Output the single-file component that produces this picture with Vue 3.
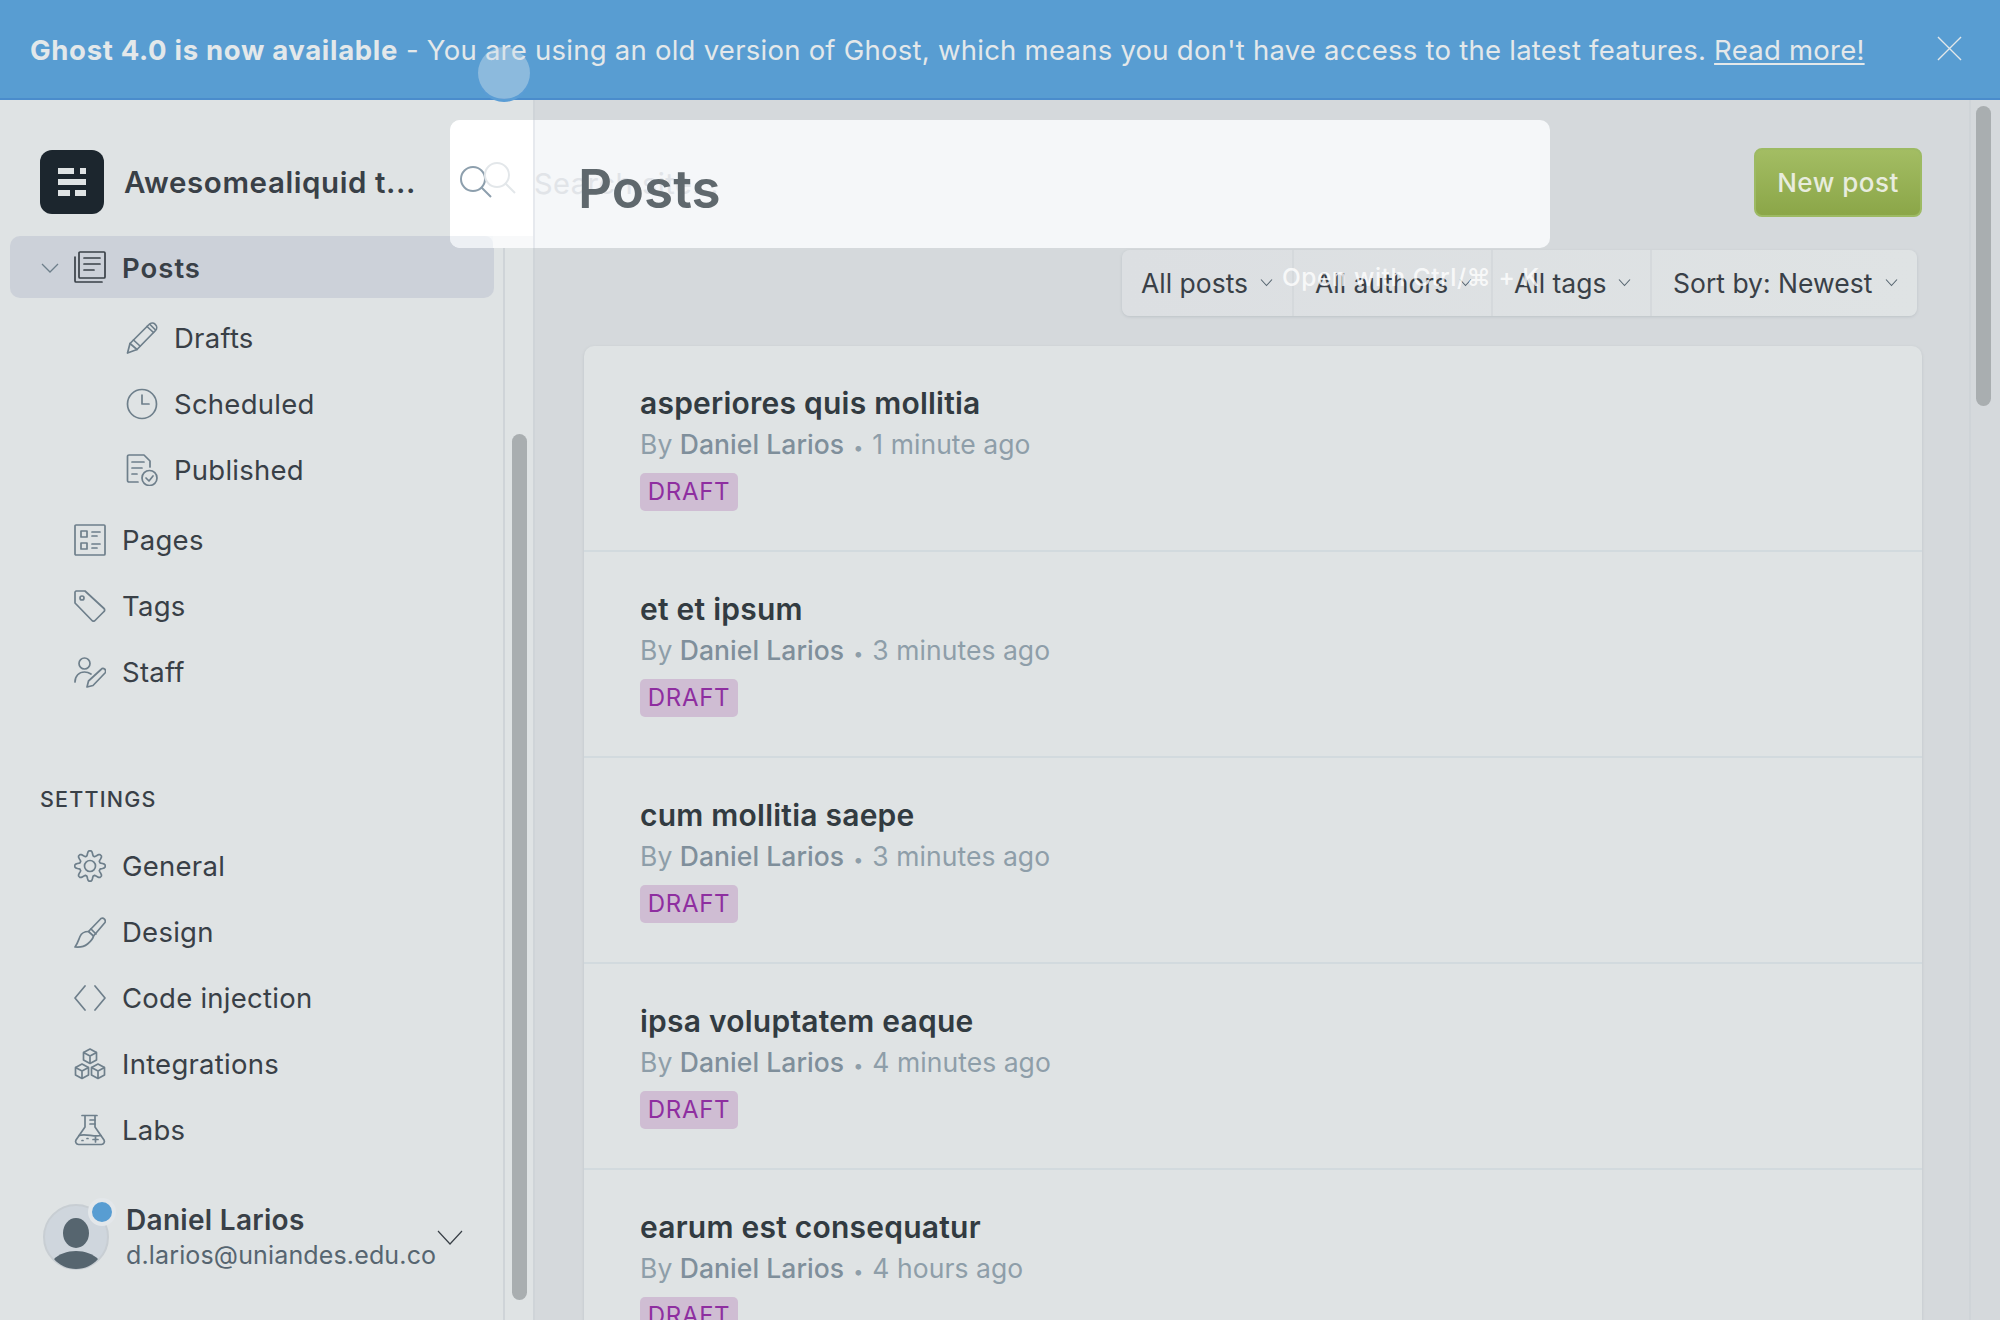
<script setup>
const gear = (() => {
  const cx = 16, cy = 16, n = 8, steps = 96
  let d = ''
  for (let i = 0; i < steps; i++) {
    const a = (i / steps) * Math.PI * 2
    const r = 12.8 + 2.4 * Math.max(-1, Math.min(1, 1.35 * Math.cos(n * a)))
    d += (i ? 'L' : 'M') + (cx + r * Math.sin(a)).toFixed(2) + ' ' + (cy - r * Math.cos(a)).toFixed(2)
  }
  return d + 'z'
})()

const circle = (x, y, r) => `M${x - r} ${y}a${r} ${r} 0 1 0 ${2 * r} 0a${r} ${r} 0 1 0 ${-2 * r} 0z`
const cube = (x, y) => `M${x} ${y}l6.5 3.5v7.5L${x} ${y + 14.5}l-6.5-3.5V${y + 3.5}zM${x - 6.5} ${y + 3.5}L${x} ${y + 7}l6.5-3.5M${x} ${y + 7}v7.5`

const icons = {
  posts: ['M6 1h24a1 1 0 0 1 1 1v24a1 1 0 0 1-1 1H6a1 1 0 0 1-1-1V2a1 1 0 0 1 1-1z', 'M1 6v24a1 1 0 0 0 1 1h26', 'M10 7h16M10 13h16M10 19h10'],
  drafts: ['M1.5 31l2.500-9.500L23 2.500a4 4 0 0 1 6.500 6L11 27.500z', 'M4 21.500l7 6M21 4.500l6.500 6M7.500 18l6.500 6M24 2.500l5 5'],
  scheduled: [circle(16, 16, 14.5), 'M16 7v9h7'],
  published: ['M12 28H3a1.5 1.5 0 0 1-1.5-1.5V2.5A1.5 1.5 0 0 1 3 1h15l6 6v6', 'M6 8h12M6 14h10M6 20h5', circle(23.5, 24, 7.5), 'M20 24l3 3 4-5'],
  pages: ['M2 1h28a1 1 0 0 1 1 1v28a1 1 0 0 1-1 1H2a1 1 0 0 1-1-1V2a1 1 0 0 1 1-1z', 'M7 7h6v6H7zM7 19h6v6H7zM18 8h8M18 12h5M18 20h8M18 24h5'],
  tags: ['M2 1h9l19 17.5a2 2 0 0 1 0 3L21 30.5a2 2 0 0 1-3 0L1 13V2z', circle(8, 8, 2)],
  staff: [circle(10.5, 7.5, 5.5), 'M1 26c0-6 4-10 9.5-10 2.5 0 4.5.7 6.5 2', 'M13 31l1.500-6L27 13.500a2.500 2.500 0 0 1 4 3.500L19 29.500z'],
  general: [gear, circle(16, 16, 5.5)],
  design: ['M27 2.500a3 3 0 0 1 4 4L19.500 20l-5-4.500z', 'M17 13l5 5', 'M14.500 15.500c-4 0-7 1.500-8.500 5-1.500 3.500-2.500 7.500-5 10.500 5 .5 9.500-.5 12.500-3 3-2.500 5.500-5 6-8'],
  code: ['M11 4L1 16l10 12M21 4l10 12-10 12'],
  integrations: [cube(16, 1), cube(8, 16), cube(24, 16)],
  labs: ['M8 1.500h15M11 1.500V13L2 26a3 3 0 0 0 2.500 4.500h23A3 3 0 0 0 30 26L21 13V1.500', 'M21 6h-5M21 10h-5M5 21.500c7-2.500 15 2 22 0', 'M8 26.500h1M13 24.500h1M19 25.500h5M21.500 23v5'],
}

const postChildren = [
  { label: 'Drafts', icon: 'drafts' },
  { label: 'Scheduled', icon: 'scheduled' },
  { label: 'Published', icon: 'published' },
]
const primary = [
  { label: 'Pages', icon: 'pages' },
  { label: 'Tags', icon: 'tags' },
  { label: 'Staff', icon: 'staff' },
]
const settings = [
  { label: 'General', icon: 'general' },
  { label: 'Design', icon: 'design' },
  { label: 'Code injection', icon: 'code' },
  { label: 'Integrations', icon: 'integrations' },
  { label: 'Labs', icon: 'labs' },
]
const filters = [
  { label: 'All posts', cls: 'f1' },
  { label: 'All authors', cls: 'f2' },
  { label: 'All tags', cls: 'f3' },
  { label: 'Sort by: Newest', cls: 'f4' },
]
const posts = [
  { title: 'asperiores quis mollitia', age: '1 minute ago' },
  { title: 'et et ipsum', age: '3 minutes ago' },
  { title: 'cum mollitia saepe', age: '3 minutes ago' },
  { title: 'ipsa voluptatem eaque', age: '4 minutes ago' },
  { title: 'earum est consequatur', age: '4 hours ago' },
]
</script>

<template>
  <div class="page">
    <header class="banner">
      <p class="banner-text"><strong>Ghost 4.0 is now available</strong> - You are using an old version of Ghost, which means you don't have access to the latest features. <a>Read more!</a></p>
      <svg class="close" viewBox="0 0 26 26"><path d="M1 1l24 24M25 1L1 25" /></svg>
    </header>

    <div class="body">
      <aside class="sidebar">
        <div class="brand">
          <div class="logo">
            <svg viewBox="0 0 28 28" width="28" height="28">
              <path d="M0 0h16v6H0zM22 0h6v6h-6zM0 11h28v6H0zM0 22h12v6H0zM17 22h11v6H17z" fill="#dfe3e4" />
            </svg>
          </div>
          <span class="brand-name">Awesomealiquid t...</span>
        </div>

        <div class="nav-row active">
          <svg class="chev" viewBox="0 0 18 10"><path d="M1 1l8 8 8-8" /></svg>
          <svg class="ico dark" viewBox="0 0 32 32"><path v-for="d in icons.posts" :key="d" :d="d" /></svg>
          <span>Posts</span>
        </div>
        <div class="children">
          <div v-for="item in postChildren" :key="item.label" class="nav-row child">
            <svg class="ico" viewBox="0 0 32 32"><path v-for="d in icons[item.icon]" :key="d" :d="d" /></svg>
            <span>{{ item.label }}</span>
          </div>
        </div>
        <div class="group">
          <div v-for="item in primary" :key="item.label" class="nav-row">
            <svg class="ico" viewBox="0 0 32 32"><path v-for="d in icons[item.icon]" :key="d" :d="d" /></svg>
            <span>{{ item.label }}</span>
          </div>
        </div>

        <h4 class="section">SETTINGS</h4>
        <div class="group-settings">
          <div v-for="item in settings" :key="item.label" class="nav-row">
            <svg class="ico" viewBox="0 0 32 32"><path v-for="d in icons[item.icon]" :key="d" :d="d" /></svg>
            <span>{{ item.label }}</span>
          </div>
        </div>

        <div class="user">
          <div class="avatar">
            <svg viewBox="0 0 66 66" width="66" height="66">
              <circle cx="33" cy="33" r="32" fill="#cfd6dd" stroke="#c8ced3" stroke-width="2" />
              <ellipse cx="33" cy="29" rx="13" ry="15" fill="#56656f" />
              <path d="M11 55c5-5 13-8 22-8s17 3 22 8c-5 6-13 10-22 10s-17-4-22-10z" fill="#56656f" />
            </svg>
            <span class="dot"></span>
          </div>
          <div class="user-text">
            <div class="user-name">Daniel Larios</div>
            <div class="user-mail">d.larios@uniandes.edu.co</div>
          </div>
          <svg class="user-chev" viewBox="0 0 26 16"><path d="M1 1l12 13L25 1" /></svg>
        </div>
      </aside>

      <div class="gutter"><div class="thumb side-thumb"></div></div>

      <main class="main">
        <div class="head">
          <button class="new">New post</button>
        </div>
        <div class="filter-wrap">
          <div class="filters">
            <div v-for="f in filters" :key="f.label" class="filter" :class="f.cls">
              <span>{{ f.label }}</span>
              <svg viewBox="0 0 12 8"><path d="M.5 .5l5.500 6 5.500-6" /></svg>
            </div>
          </div>
        </div>
        <section class="list">
          <article v-for="p in posts" :key="p.title" class="post">
            <h3>{{ p.title }}</h3>
            <p class="meta">By <b>Daniel Larios</b><i>•</i>{{ p.age }}</p>
            <span class="draft">DRAFT</span>
          </article>
        </section>
      </main>

      <div class="gutter main-gutter"><div class="thumb main-thumb"></div></div>
    </div>

    <!-- Search overlay caught mid-fade, lying over the page -->
    <div class="search">
      <div class="search-left"></div>
      <div class="search-under"></div>
      <div class="search-low"></div>
      <svg class="glass g1" viewBox="0 0 34 34"><path d="M25 13a12 12 0 1 1-24 0a12 12 0 1 1 24 0zM21.500 21.500L31 31" /></svg>
      <svg class="glass g2" viewBox="0 0 34 34"><path d="M25 13a12 12 0 1 1-24 0a12 12 0 1 1 24 0zM21.500 21.500L31 31" /></svg>
      <span class="search-ph">Search site...</span>
    </div>
    <h1 class="ghost-title">Posts</h1>
    <span class="hint">Open with Ctrl/⌘ + K</span>
    <div class="beacon"></div>
  </div>
</template>

<style>
html, body { margin: 0; background: #dfe3e4; }
</style>

<style scoped>
.page {
  position: relative;
  width: 2000px;
  height: 1320px;
  overflow: hidden;
  display: flex;
  flex-direction: column;
  font-family: Inter, "Noto Sans", sans-serif;
  color: #394047;
}
.banner {
  height: 100px;
  box-sizing: border-box;
  flex: none;
  background: #589dd2;
  border-bottom: 2px solid #4a8ccc;
  padding-left: 30px;
  display: flex;
  align-items: center;
  color: #e3e8ea;
  position: relative;
}
.banner-text { margin: 0; font-size: 27.5px; letter-spacing: 0.25px; white-space: nowrap; position: relative; top: 1px; }
.banner-text strong { font-weight: 700; letter-spacing: 0.68px; }
.banner-text a { text-decoration: underline; text-underline-offset: 3px; text-decoration-thickness: 2px; }
.close { position: absolute; left: 1937px; top: 36px; width: 25px; height: 25px; fill: none; stroke: #e3e8ea; stroke-width: 1.4; }

.body { flex: 1; display: flex; min-height: 0; }
.sidebar {
  width: 505px;
  flex: none;
  box-sizing: border-box;
  background: #dfe3e4;
  padding: 50px 0 0 10px;
  position: relative;
}
.sidebar::after {
  content: "";
  position: absolute;
  right: 0;
  top: 136px;
  bottom: 0;
  width: 2px;
  background: #cfd4d8;
}
.brand { display: flex; align-items: center; padding-left: 30px; gap: 20px; height: 64px; }
.logo {
  width: 64px; height: 64px; border-radius: 12px; background: #1c262e;
  display: flex; align-items: center; justify-content: center;
}
.brand-name { font-size: 29.5px; font-weight: 600; letter-spacing: 0.6px; white-space: nowrap; }

.nav-row {
  display: flex;
  align-items: center;
  height: 66px;
  padding-left: 64px;
  font-size: 27.5px;
  letter-spacing: 0.25px;
  color: #394047;
}
.nav-row.active {
  width: 484px;
  height: 62px;
  box-sizing: border-box;
  margin-top: 22px;
  border-radius: 10px;
  background: #ccd1d9;
  font-weight: 600;
  letter-spacing: 1px;
  position: relative;
}
.nav-row.active span { position: relative; top: 1px; }
.nav-row.child { padding-left: 116px; }
.chev { position: absolute; left: 31px; top: 27px; width: 18px; height: 10px; fill: none; stroke: #6e7f8b; stroke-width: 1.3; }
.ico { width: 32px; height: 32px; flex: none; margin-right: 16px; fill: none; stroke: #6e7f8b; stroke-width: 1.7; stroke-linejoin: round; stroke-linecap: round; }
.ico.dark { stroke: #394047; }
.children { margin-top: 7px; }
.group { margin-top: 4px; }
.section {
  margin: 82px 0 0 30px;
  height: 24px;
  line-height: 24px;
  font-size: 21.5px;
  font-weight: 500;
  letter-spacing: 1.2px;
  color: #394047;
}
.group-settings { margin-top: 22px; }

.user { display: flex; align-items: center; padding-left: 33px; margin-top: 39px; position: relative; }
.avatar { width: 66px; height: 66px; position: relative; flex: none; }
.dot {
  position: absolute; left: 45px; top: -6px; width: 20px; height: 20px;
  border-radius: 50%; background: #589dd2; border: 4px solid #e3e7ea;
}
.user-text { margin-left: 17px; white-space: nowrap; }
.user-name { font-size: 28px; font-weight: 600; line-height: 36px; letter-spacing: 0.3px; }
.user-mail { font-size: 25px; line-height: 34px; letter-spacing: 0.15px; color: #566570; }
.user-chev { position: absolute; left: 427px; top: 28px; width: 26px; height: 16px; fill: none; stroke: #394047; stroke-width: 1.2; }

.gutter { width: 28px; flex: none; background: #dfe3e4; position: relative; border-right: 2px solid #cfd4d8; }
.thumb { position: absolute; width: 15px; background: #a9aeb0; border-radius: 8px; }
.side-thumb { left: 7px; top: 334px; height: 866px; }
.main-gutter { width: 29px; background: #d5d9dc; border-right: 0; border-left: 2px solid #cfd4d8; }
.main-thumb { left: 5px; top: 6px; height: 300px; }

.main { flex: 1; min-width: 0; background: #d5d9dc; padding: 48px 47px 0 49px; overflow: hidden; }
.head { display: flex; justify-content: flex-end; height: 69px; }
.new {
  width: 168px; height: 69px; border-radius: 8px; border: 2px solid #9dba63;
  background: linear-gradient(#a3bd63, #8ba648);
  color: #e8ecde; font: 500 26px Inter, sans-serif; letter-spacing: 0.5px;
}
.filter-wrap { display: flex; justify-content: flex-end; padding-right: 5px; margin-top: 33px; }
.filters {
  display: flex; height: 66px; border-radius: 8px;
  background: linear-gradient(90deg, #dcdfe2, #dfe3e4);
  box-shadow: 0 1px 3px rgba(120, 130, 140, 0.25);
}
.filter {
  display: flex; align-items: center; justify-content: space-between; box-sizing: border-box;
  padding: 0 19px 0 21px; font-size: 26.5px; border-right: 2px solid #d5d9dc; white-space: nowrap;
}
.filter:last-child { border-right: 0; }
.f1 { width: 172px; padding-left: 19px; } .f2 { width: 199px; } .f3 { width: 159px; } .f4 { width: 265px; }
.filter svg { width: 13px; height: 8px; fill: none; stroke: #566570; stroke-width: 1.1; flex: none; }

.list { margin-top: 30px; background: #dfe3e4; border-radius: 10px 10px 0 0; box-shadow: 0 1px 3px rgba(120, 130, 140, 0.25); }
.post { height: 206px; box-sizing: border-box; padding: 37px 56px 0; border-bottom: 2px solid #d2dade; }
.post h3 { margin: 0; font-size: 30px; line-height: 40px; font-weight: 600; letter-spacing: 0.23px; color: #323b41; }
.meta { margin: 2px 0 0; font-size: 26.5px; line-height: 38px; letter-spacing: 0.05px; color: #8e9ea9; white-space: nowrap; }
.meta b { font-weight: 500; color: #7f8f9b; }
.meta i { font-style: normal; margin: 0 9px; font-size: 18px; }
.draft {
  display: inline-block; margin-top: 6px; width: 98px; height: 38px; line-height: 38px; text-align: center;
  border-radius: 5px; background: #cfbdd3; color: #8e2ea0; font-size: 24px; font-weight: 400; letter-spacing: 0.7px;
}

.search {
  position: absolute; left: 450px; top: 120px; width: 1100px; height: 128px;
  background: #f5f7f9; border-radius: 10px; overflow: hidden;
}
.search-left { position: absolute; left: 0; top: 0; width: 83px; height: 116px; background: #fff; border-right: 2px solid #e6e9ee; }
.search-under { position: absolute; left: 43px; top: 116px; width: 40px; height: 12px; background: #f8f9fa; border-right: 2px solid #e6e9ee; }
.search-low { position: absolute; left: 0; top: 116px; width: 43px; height: 12px; background: #edf0f4; border-top-right-radius: 8px; }
.glass { position: absolute; width: 34px; height: 34px; fill: none; stroke-width: 2; }
.g1 { left: 10px; top: 46px; stroke: #8d9fad; }
.g2 { left: 34px; top: 42px; stroke: #e3e7ea; }
.search-ph { position: absolute; left: 84px; top: 46px; font-size: 29px; color: #e1e4e8; letter-spacing: 0.5px; white-space: nowrap; }
.ghost-title {
  position: absolute; left: 578px; top: 154px; margin: 0;
  font-size: 53px; line-height: 70px; font-weight: 600; color: #5f686d;
}
.hint { position: absolute; left: 1282px; top: 262px; font-size: 24.5px; font-weight: 500; letter-spacing: 0.5px; color: rgba(255, 255, 255, 0.8); white-space: nowrap; }
.beacon {
  position: absolute; left: 478px; top: 47px; width: 52px; height: 52px; border-radius: 50%;
  background: rgba(205, 222, 236, 0.45); box-shadow: 0 3px 0 #5a9dd5;
}
</style>
